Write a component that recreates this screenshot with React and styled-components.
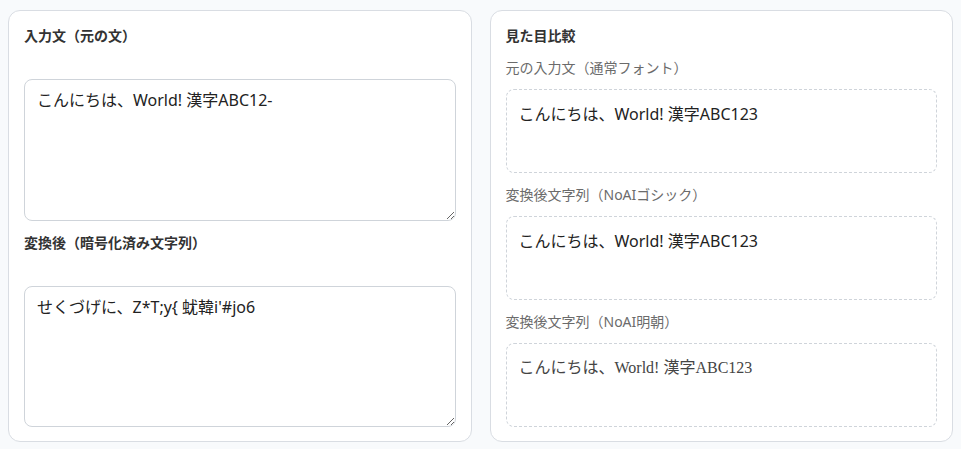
import React, { useState } from "react";
import styled, { createGlobalStyle } from "styled-components";

const GlobalStyle = createGlobalStyle`
  html, body {
    margin: 0;
    padding: 0;
    background: #f8fafc;
  }
  body {
    font-family: "Noto Sans", "Noto Sans CJK JP", sans-serif;
    color: #222;
  }
`;

const Page = styled.div`
  display: grid;
  grid-template-columns: 1fr 1fr;
  gap: 18px;
  padding: 10px 8px;
`;

const Card = styled.section`
  display: flex;
  flex-direction: column;
  gap: ${props => props.gap}px;
  background: #fff;
  border: 1px solid #d9dde3;
  border-radius: 12px;
  padding: 14px 15px;
`;

const Section = styled.div`
  flex: 1;
  display: flex;
  flex-direction: column;
`;

const Title = styled.h2`
  margin: 0 0 ${props => props.spacing || 0}px;
  font-size: 14px;
  line-height: 21px;
  font-weight: 700;
  color: #333;
`;

const Label = styled.div`
  font-size: 14px;
  line-height: 21px;
  color: #6b6b6b;
`;

const Input = styled.textarea`
  flex: 1;
  box-sizing: border-box;
  width: 100%;
  margin: 0;
  padding: 8px 12px;
  border: 1px solid #cfd4da;
  border-radius: 8px;
  font-family: "Noto Sans", "Noto Sans CJK JP", sans-serif;
  font-size: 16px;
  line-height: 24px;
  color: #222;
  background: #fff;
  outline: none;
`;

const Preview = styled.div`
  box-sizing: border-box;
  height: 84px;
  padding: 12px;
  border: 1px dashed #cfd4da;
  border-radius: 8px;
  font-size: 16px;
  line-height: 24px;
  color: ${props => (props.serif ? "#444" : "#222")};
  font-family: ${props =>
    props.serif
      ? `"Liberation Serif", "Noto Sans CJK JP", serif`
      : `"Noto Sans", "Noto Sans CJK JP", sans-serif`};
  white-space: pre-wrap;
`;

const source = "こんにちは、World! 漢字ABC123";

export default function App() {
  const [input, setInput] = useState("こんにちは、World! 漢字ABC12-");
  const [output, setOutput] = useState("せくづげに、Z*T;y{ 蚘韓i'#jo6");

  const previews = [
    { label: "元の入力文（通常フォント）", serif: false },
    { label: "変換後文字列（NoAIゴシック）", serif: false },
    { label: "変換後文字列（NoAI明朝）", serif: true },
  ];

  return (
    <>
      <GlobalStyle />
      <Page>
        <Card gap={11}>
          <Section>
            <Title spacing={33}>入力文（元の文）</Title>
            <Input value={input} onChange={e => setInput(e.target.value)} />
          </Section>
          <Section>
            <Title spacing={33}>変換後（暗号化済み文字列）</Title>
            <Input value={output} onChange={e => setOutput(e.target.value)} />
          </Section>
        </Card>

        <Card gap={11}>
          <Title>見た目比較</Title>
          {previews.map(p => (
            <React.Fragment key={p.label}>
              <Label>{p.label}</Label>
              <Preview serif={p.serif}>{source}</Preview>
            </React.Fragment>
          ))}
        </Card>
      </Page>
    </>
  );
}
